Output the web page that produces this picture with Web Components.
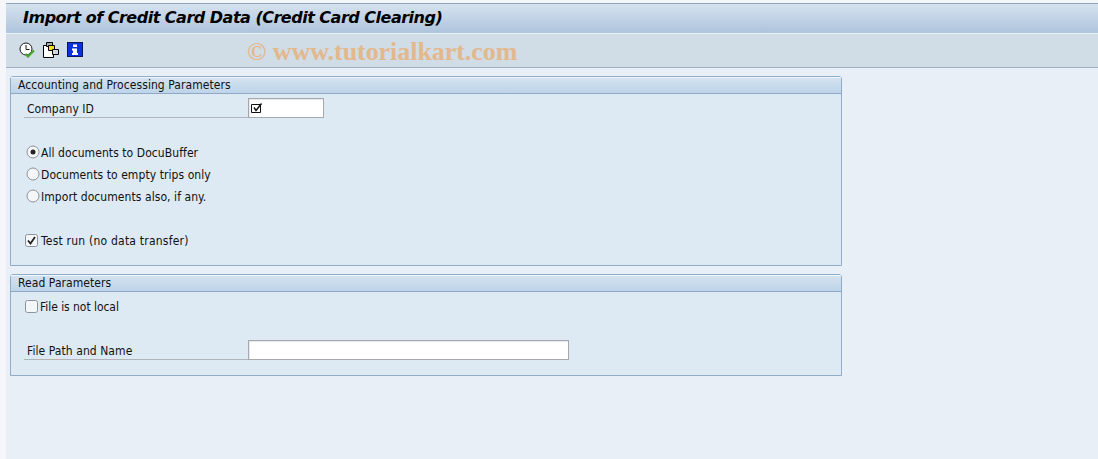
<!DOCTYPE html>
<html>
<head>
<meta charset="utf-8">
<style>
  html, body { margin: 0; padding: 0; height: 100%; background: #f4f6f9; }
  body { overflow: hidden; font-family: "DejaVu Sans Condensed", "DejaVu Sans", sans-serif; }
</style>
</head>
<body>
<sap-screen>
  <sap-title slot="title">Import of Credit Card Data (Credit Card Clearing)</sap-title>
  <sap-toolbar slot="toolbar" mark="© www.tutorialkart.com">
    <sap-icon name="clock"></sap-icon>
    <sap-icon name="copies"></sap-icon>
    <sap-icon name="info"></sap-icon>
  </sap-toolbar>

  <sap-panel heading="Accounting and Processing Parameters" class="first">
    <sap-field label="Company ID" width="76" checked></sap-field>
    <sap-gap></sap-gap>
    <sap-option type="radio" checked>All documents to DocuBuffer</sap-option>
    <sap-option type="radio">Documents to empty trips only</sap-option>
    <sap-option type="radio">Import documents also, if any.</sap-option>
    <sap-gap></sap-gap>
    <sap-option type="check" checked style="letter-spacing:.22px">Test run (no data transfer)</sap-option>
  </sap-panel>

  <sap-panel heading="Read Parameters" class="second">
    <sap-option type="check" style="--gap:2px;letter-spacing:-.05px">File is not local</sap-option>
    <sap-gap></sap-gap>
    <sap-field label="File Path and Name" width="321"></sap-field>
  </sap-panel>
</sap-screen>

<script>
const TEXT_FONT = `12px/20px "DejaVu Sans Condensed", "DejaVu Sans", sans-serif`;

const ICONS = {
  clock: `<circle cx="7" cy="7" r="6" fill="#fff" stroke="#1a1a1a"/>
    <path d="M7 3V7.5H10.5" fill="none" stroke="#1a1a1a"/>
    <path d="M6.5 12L9 14.5L15 8.5" fill="none" stroke="#46a832" stroke-width="2.2"/>`,
  copies: `<path d="M.5 3.5H10.5V15.5H.5Z" fill="#fff" stroke="#000"/>
    <path d="M3.5 .5H9.5V4.5H3.5Z" fill="#a8adb4" stroke="#000"/>
    <path d="M5.5 3.5H11.5V8.5H5.5Z" fill="#f7dc1c" stroke="#000"/>
    <path d="M9.5 7.5H15.5V12.5H9.5Z" fill="#cfd5dc" stroke="#000"/>`,
  info: `<rect x=".5" y=".5" width="15" height="14" fill="#0c30e0" stroke="#08165c"/>
    <path d="M6 2.5H10V5H6ZM5 6.5H10V11H11V13H5V11H6V8.5H5Z" fill="#fff"/>`
};

class SapScreen extends HTMLElement {
  constructor() {
    super();
    this.attachShadow({ mode: "open" }).innerHTML = `<style>
      :host { display: block; height: 459px; padding: 3px 0 0 6px; box-sizing: border-box;
        background: #f4f6f9; }
      .wrap { height: 100%; display: flex; flex-direction: column; background: #e8eff7; }
      .content { padding: 8px 256px 0 4px; display: flex; flex-direction: column; gap: 8px; }
    </style>
    <div class="wrap">
      <slot name="title"></slot>
      <slot name="toolbar"></slot>
      <div class="content"><slot></slot></div>
    </div>`;
  }
}

class SapTitle extends HTMLElement {
  constructor() {
    super();
    this.attachShadow({ mode: "open" }).innerHTML = `<style>
      :host { display: block; height: 31px; box-sizing: border-box; padding-left: 17px;
        border-top: 1px solid #8fa3b8; border-bottom: 1px solid #eef3f8;
        background: linear-gradient(#d6e2ef, #adc4dc);
        font: italic bold 16px/27px "DejaVu Sans", sans-serif; letter-spacing: -.5px;
        color: #000; white-space: nowrap; }
    </style><slot></slot>`;
  }
}

class SapToolbar extends HTMLElement {
  constructor() {
    super();
    this.attachShadow({ mode: "open" }).innerHTML = `<style>
      :host { display: flex; align-items: flex-start; height: 34px; box-sizing: border-box;
        padding: 8px 0 0 13px; gap: 8px; position: relative;
        background: #d0dce6; border-bottom: 1px solid #a0b0c2; }
      .mark { position: absolute; left: 241px; top: 3px; white-space: nowrap;
        font: bold 26px/30px "Liberation Serif", serif; letter-spacing: -.05px; color: #e3b88d; }
    </style><slot></slot><span class="mark">${this.getAttribute("mark")}</span>`;
  }
}

class SapIcon extends HTMLElement {
  constructor() {
    super();
    this.attachShadow({ mode: "open" }).innerHTML = `<style>
      :host { display: block; width: 16px; height: 16px; }
      svg { display: block; }
    </style><svg width="16" height="16" viewBox="0 0 16 16">${ICONS[this.getAttribute("name")]}</svg>`;
  }
}

class SapPanel extends HTMLElement {
  constructor() {
    super();
    this.attachShadow({ mode: "open" }).innerHTML = `<style>
      :host { display: block; box-sizing: border-box; border: 1px solid #8fadc8;
        border-radius: 3px 3px 0 0; background: #dde9f3; padding-bottom: 14px; letter-spacing: .07px; }
      .head { height: 17px; box-sizing: border-box; padding-left: 7px; border-bottom: 1px solid #8fa8c4;
        border-top: 1px solid #f0f5fa; background: linear-gradient(#d3e2f0, #bed4e9);
        font: ${TEXT_FONT}; line-height: 15px; color: #111; }
      .body { padding-top: 3px; }
    </style><div class="head">${this.getAttribute("heading")}</div><div class="body"><slot></slot></div>`;
  }
}

class SapGap extends HTMLElement {
  constructor() {
    super();
    this.attachShadow({ mode: "open" }).innerHTML = `<style>:host { display: block; height: 22px; }</style>`;
  }
}

class SapField extends HTMLElement {
  constructor() {
    super();
    const mark = this.hasAttribute("checked")
      ? `<svg width="12" height="11" viewBox="0 0 12 11"><path d="M.5 1.5H9.5V9.5H.5Z" fill="none" stroke="#111"/><path d="M3 4.5L5 7.5L10.5 .5" fill="none" stroke="#111" stroke-width="1.4"/></svg>`
      : "";
    this.attachShadow({ mode: "open" }).innerHTML = `<style>
      :host { display: flex; height: 22px; padding-left: 13px; align-items: center; }
      .label { width: 224px; box-sizing: border-box; height: 20px; padding: 1px 0 0 3px;
        border-bottom: 1px solid #b0b4b8; font: ${TEXT_FONT}; color: #111; }
      .input { box-sizing: border-box; height: 20px; background: #fff; padding: 4px 0 0 2px;
        border: 1px solid #a5a9ad; box-shadow: inset 1px 1px 1px #e6e6ee; }
      svg { display: block; }
    </style><div class="label">${this.getAttribute("label")}</div>
    <div class="input" style="width:${this.getAttribute("width")}px">${mark}</div>`;
  }
}

class SapOption extends HTMLElement {
  constructor() {
    super();
    const radio = this.getAttribute("type") === "radio";
    const on = this.hasAttribute("checked");
    const box = radio
      ? `<svg width="14" height="14" viewBox="0 0 14 14"><circle cx="7" cy="7" r="6" fill="#f4f6f8" stroke="#8d9299"/>${on ? '<circle cx="7" cy="7" r="2.5" fill="#222"/>' : ""}</svg>`
      : `<svg width="13" height="13" viewBox="0 0 13 13"><rect x=".5" y=".5" width="12" height="12" rx="2" fill="#f4f6f8" stroke="#8d9299"/>${on ? '<path d="M3 6.5L5.5 9.5L10 3" fill="none" stroke="#222" stroke-width="1.8"/>' : ""}</svg>`;
    this.attachShadow({ mode: "open" }).innerHTML = `<style>
      :host { display: flex; height: 22px; padding-left: ${radio ? 15 : 14}px; align-items: center;
        gap: var(--gap, ${radio ? 1 : 3}px); font: ${TEXT_FONT}; color: #111; white-space: nowrap; }
      svg { display: block; }
      .text { padding-top: 2px; }
    </style>${box}<span class="text"><slot></slot></span>`;
  }
}

customElements.define("sap-screen", SapScreen);
customElements.define("sap-title", SapTitle);
customElements.define("sap-toolbar", SapToolbar);
customElements.define("sap-icon", SapIcon);
customElements.define("sap-panel", SapPanel);
customElements.define("sap-gap", SapGap);
customElements.define("sap-field", SapField);
customElements.define("sap-option", SapOption);
</script>
</body>
</html>
